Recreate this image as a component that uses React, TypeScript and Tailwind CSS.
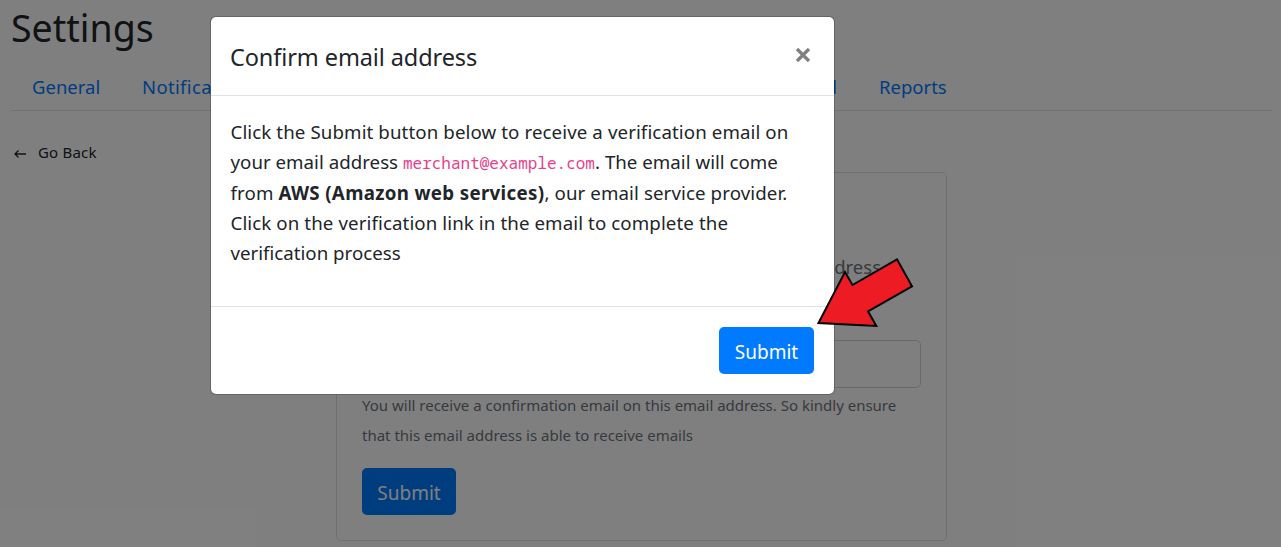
import type { ReactNode } from "react";

function Tab({ className, children }: { className: string; children: ReactNode }) {
  return (
    <a href="#" className={`block shrink-0 whitespace-nowrap text-[#007bff] ${className}`}>
      {children}
    </a>
  );
}

function SettingsPage() {
  return (
    <main className="h-full overflow-hidden bg-white pr-[9px] pl-[11px]">
      <h1 className="h-[70px] pt-[4px] text-[37.5px] leading-[48px]">Settings</h1>
      <nav className="flex h-[41px] items-start border-b border-[#dee2e6] pt-[2px] pl-[21px] text-[18.5px] leading-[30px]">
        <Tab className="w-[110px]">General</Tab>
        <Tab className="w-[640px] tracking-[0.35px]">Notifications</Tab>
        <Tab className="w-[55px] text-right">Email</Tab>
        <Tab className="ml-[42px]">Reports</Tab>
      </nav>
      <div className="flex items-start pt-[29px]">
        <a href="#" className="flex h-[26px] w-[325px] items-center pl-[3px] text-[15px] tracking-[0.2px]">
          <svg className="mt-[1px] mr-[11px]" width="13" height="10" viewBox="0 0 13 10" fill="none" stroke="currentColor" strokeWidth="1.3">
            <path d="M12 5H1M4.5 1.5 1 5l3.5 3.5" />
          </svg>
          <span className="-mt-[2px]">Go Back</span>
        </a>
        <section className="mt-[32px] h-[369px] w-[611px] rounded-[5px] border border-[#dfdfdf] px-[25px]">
          <p className="mt-[79px] h-[88px] w-[519px] text-right text-[18.5px] leading-[30px] text-[#6c757d]">
            Verify your email address
          </p>
          <input
            aria-label="Email address"
            className="block h-[48px] w-full rounded-[5px] border border-[#ced4da] bg-white"
          />
          <p className="mt-[2px] text-[15px] leading-[30px] whitespace-nowrap text-[#6c757d]">
            <span className="block">You will receive a confirmation email on this email address. So kindly ensure</span>
            <span className="block">that this email address is able to receive emails</span>
          </p>
          <button className="mt-[18px] h-[47px] w-[94px] rounded-[5px] bg-[#007bff] pt-[4px] text-[19px] text-white">
            Submit
          </button>
        </section>
      </div>
    </main>
  );
}

function ConfirmDialog() {
  return (
    <div
      role="dialog"
      className="flex h-[379px] w-[625px] flex-col rounded-[6px] border border-black/20 bg-white bg-clip-padding"
    >
      <header className="flex h-[79px] items-center justify-between border-b border-[#dee2e6] pr-[23px] pl-[19px]">
        <h2 className="pt-[4px] text-[23.5px] tracking-[-0.1px] whitespace-nowrap">Confirm email address</h2>
        <button aria-label="Close" className="-mt-[2px] text-[#7f7f7f]">
          <svg width="16" height="16" viewBox="0 0 16 16" fill="none" stroke="currentColor" strokeWidth="3.2">
            <path d="M2 2 14 14M14 2 2 14" />
          </svg>
        </button>
      </header>
      <div className="h-[210px] pt-[21px] pl-[19.5px] text-[18.7px] leading-[30.3px] tracking-[0.1px] whitespace-nowrap">
        <p>
          <span className="block">Click the Submit button below to receive a verification email on</span>
          <span className="block tracking-[0.02px]">
            your email address{" "}
            <code className="font-['Noto_Sans_Mono','DejaVu_Sans_Mono',monospace] text-[16px] leading-none tracking-normal text-[#e83e8c]">
              merchant@example.com
            </code>
            . The email will come
          </span>
          <span className="block">
            from <strong className="font-bold tracking-[0.34px]">AWS (Amazon web services)</strong>, our email service provider.
          </span>
          <span className="block">Click on the verification link in the email to complete the</span>
          <span className="block tracking-normal">verification process</span>
        </p>
      </div>
      <footer className="flex flex-1 items-start justify-end border-t border-[#dee2e6] pt-[20px] pr-[20px]">
        <button className="h-[47px] w-[95px] rounded-[5px] bg-[#007bff] pt-[4px] text-[19px] text-white">Submit</button>
      </footer>
    </div>
  );
}

export default function App() {
  return (
    <div className="relative h-[547px] w-full overflow-hidden font-['Noto_Sans','Open_Sans',sans-serif] text-[#212529]">
      <SettingsPage />
      <div className="absolute inset-0 bg-black/50 pt-[16px] pl-[210px]">
        <ConfirmDialog />
      </div>
      <svg
        className="absolute top-[254px] left-[812px]"
        width="106"
        height="78"
        viewBox="812 254 106 78"
        fill="#ed1c24"
        stroke="#000"
        strokeWidth="2"
      >
        <path d="M818.5 323 845 272l7.5 13L897 259.3l15 27-44 25 8.3 14.6Z" />
      </svg>
    </div>
  );
}
